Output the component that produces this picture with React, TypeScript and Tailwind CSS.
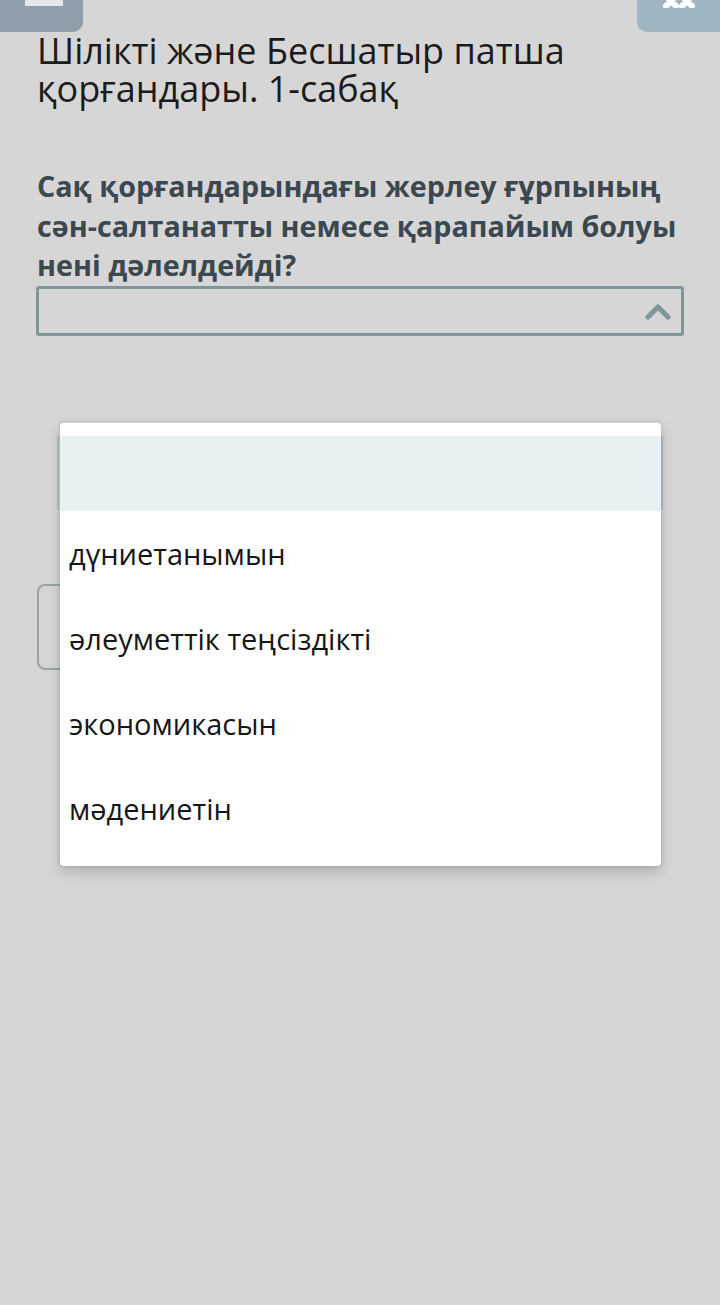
import React from "react";

export default function App() {
  const options = ["дүниетанымын", "әлеуметтік теңсіздікті", "экономикасын", "мәдениетін"];
  return (
    <div
      className="relative w-[720px] h-[1305px] bg-[#d6d6d6] overflow-hidden"
      style={{ fontFamily: '"Open Sans", "Noto Sans", sans-serif' }}
    >
      {/* top bar buttons */}
      <div className="flex justify-between h-[32px]">
        <div className="w-[83px] h-[32px] bg-[#8e9fa9] rounded-br-[10px] flex justify-center">
          <div className="w-[38px] h-[6px] bg-[#e4e8ea] ml-[4px]" />
        </div>
        <div className="w-[83px] h-[32px] bg-[#9fb6c2] rounded-bl-[10px] flex justify-center">
          <svg width="34" height="8" viewBox="0 0 34 8">
            <path d="M4 -4 L14 6 M30 -4 L20 6 M14 -4 L4 6 M20 -4 L30 6" stroke="#ffffff" strokeWidth="6" strokeLinecap="round" />
          </svg>
        </div>
      </div>

      <div className="px-[37px]">
        <h1 className="text-[36px] leading-[38px] text-[#1b1b1b] font-normal">
          Шілікті және Бесшатыр патша
          <br />
          қорғандары. 1-сабақ
        </h1>

        <p className="mt-[58px] text-[28.7px] leading-[39.5px] font-bold text-[#3c4850] whitespace-nowrap">
          Сақ қорғандарындағы жерлеу ғұрпының
          <br />
          сән-салтанатты немесе қарапайым болуы
          <br />
          нені дәлелдейді?
        </p>

        <div className="mt-[1px] -mx-[1px] h-[50px] border-[3px] border-[#7e9698] rounded-[3px] flex items-center justify-end pr-[10px]">
          <svg width="26" height="18" viewBox="0 0 26 18">
            <path d="M3 15 L13 5 L23 15" fill="none" stroke="#7e9698" strokeWidth="5" strokeLinejoin="round" strokeLinecap="round" />
          </svg>
        </div>

        {/* content hidden beneath dropdown */}
        <div className="mt-[99px] mx-[20px] h-[75px] border-x-[2px] border-[#b9c3c6] rounded-[4px]" />
        <div className="mt-[74px] h-[86px] w-[60px] border-[2px] border-[#9aa3a6] rounded-[8px]" />
      </div>

      {/* dropdown overlay */}
      <div className="absolute left-[60px] top-[422px] w-[601px] h-[444px] bg-white rounded-[4px] border-t border-[#ccd6d6] shadow-[0_6px_14px_rgba(0,0,0,0.18),0_0_4px_rgba(0,0,0,0.12)] pt-[13px]">
        <div className="h-[75px] bg-[#e8f0f3]" />
        {options.map((o) => (
          <div key={o} className="h-[85px] flex items-center pl-[9px] text-[29px] text-[#161616]">
            {o}
          </div>
        ))}
      </div>
    </div>
  );
}
